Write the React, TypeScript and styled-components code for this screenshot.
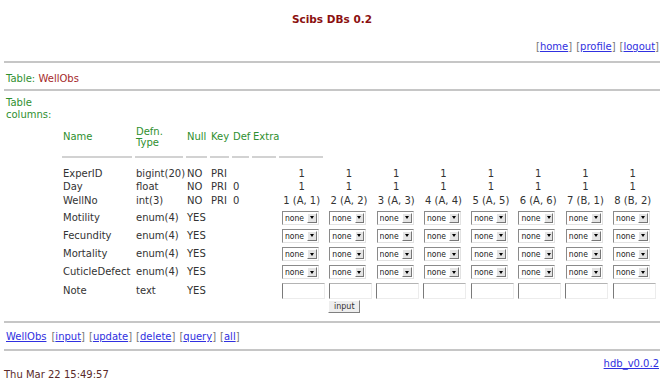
import styled, { createGlobalStyle } from 'styled-components';

const GlobalStyle = createGlobalStyle`
  html, body {
    margin: 0;
    padding: 0;
    background: #fff;
  }

  body {
    font-family: "DejaVu Sans", "Liberation Sans", sans-serif;
    font-size: 10px;
    color: #333;
  }
`;

const COLUMNS = '70px 48px 21px 19px 17px 24px repeat(8, 44.3px)';

const wells = [
  { no: 1, row: 'A', col: 1 },
  { no: 2, row: 'A', col: 2 },
  { no: 3, row: 'A', col: 3 },
  { no: 4, row: 'A', col: 4 },
  { no: 5, row: 'A', col: 5 },
  { no: 6, row: 'A', col: 6 },
  { no: 7, row: 'B', col: 1 },
  { no: 8, row: 'B', col: 2 },
];

const keyFields = [
  { name: 'ExperID', type: 'bigint(20)', key: 'PRI', def: '', value: () => '1' },
  { name: 'Day', type: 'float', key: 'PRI', def: '0', value: () => '1' },
  {
    name: 'WellNo',
    type: 'int(3)',
    key: 'PRI',
    def: '0',
    value: (w: (typeof wells)[number]) => `${w.no} (${w.row}, ${w.col})`,
  },
];

const enumFields = ['Motility', 'Fecundity', 'Mortality', 'CuticleDefect'];

const NavLinks = ({ items }: { items: string[] }) => (
  <>
    {items.map((item, i) => (
      <Bracket key={item} $first={i === 0}>
        [<Link href="#">{item}</Link>]
      </Bracket>
    ))}
  </>
);

const App = () => {
  return (
    <Page>
      <GlobalStyle />
      <Title>Scibs DBs 0.2</Title>
      <Nav>
        <NavLinks items={['home', 'profile', 'logout']} />
      </Nav>
      <Divider />
      <TableName>
        <Label>Table: </Label>
        <Accent>WellObs</Accent>
      </TableName>
      <Divider />
      <Columns>
        <ColumnsLabel>Table columns:</ColumnsLabel>
        <Grid>
          <Row $h={24}>
            <HeadCell>Name</HeadCell>
            <HeadCell>
              Defn.
              <br />
              Type
            </HeadCell>
            <HeadCell>Null</HeadCell>
            <HeadCell>Key</HeadCell>
            <HeadCell>Def</HeadCell>
            <HeadCell>Extra</HeadCell>
          </Row>
          <Row $h={18}>
            {Array.from({ length: 7 }).map((_, i) => (
              <Underline key={i} />
            ))}
          </Row>
          {keyFields.map((f) => (
            <Row key={f.name} $h={13.5}>
              <Cell>{f.name}</Cell>
              <Cell>{f.type}</Cell>
              <Cell>NO</Cell>
              <Cell>{f.key}</Cell>
              <Cell>{f.def}</Cell>
              <Cell />
              {wells.map((w) => (
                <Cell key={w.no} $center>
                  {f.value(w)}
                </Cell>
              ))}
            </Row>
          ))}
          {enumFields.map((name, i) => (
            <Row key={name} $h={18.25} $top={i === 0 ? 1 : 0}>
              <Cell>{name}</Cell>
              <Cell>enum(4)</Cell>
              <Cell>YES</Cell>
              <Cell />
              <Cell />
              <Cell />
              {wells.map((w) => (
                <Cell key={w.no}>
                  <SelectBox>
                    <NativeSelect defaultValue="none">
                      <option>none</option>
                    </NativeSelect>
                    <ArrowButton />
                  </SelectBox>
                </Cell>
              ))}
            </Row>
          ))}
          <Row $h={18}>
            <Cell>Note</Cell>
            <Cell>text</Cell>
            <Cell>YES</Cell>
            <Cell />
            <Cell />
            <Cell />
            {wells.map((w) => (
              <Cell key={w.no}>
                <TextInput type="text" />
              </Cell>
            ))}
          </Row>
          <Row $h={14.5}>
            <ButtonCell>
              <InputButton type="button">input</InputButton>
            </ButtonCell>
          </Row>
        </Grid>
      </Columns>
      <Divider $top={7} />
      <Actions>
        <Link href="#">WellObs</Link>
        <NavLinks items={['input', 'update', 'delete', 'query', 'all']} />
      </Actions>
      <Divider />
      <Footer>
        <DateText>Thu Mar 22 15:49:57</DateText>
        <Link href="#">hdb_v0.0.2</Link>
      </Footer>
    </Page>
  );
};

const Page = styled.div`
  padding: 0 4px;
  width: 656px;
`;

const Title = styled.h1`
  height: 38px;
  margin: 0;
  font-size: 10.5px;
  font-weight: bold;
  line-height: 38px;
  text-align: center;
  color: #8b1010;
`;

const Nav = styled.div`
  height: 18px;
  padding-right: 1px;
  line-height: 18px;
  text-align: right;
  margin-bottom: 5px;
`;

const Bracket = styled.span<{ $first?: boolean }>`
  margin-left: ${(p) => (p.$first ? 0 : 4)}px;
  color: #777;
`;

const Link = styled.a`
  color: #3030e0;
  text-decoration: underline;
`;

const Divider = styled.div<{ $top?: number }>`
  height: 2px;
  margin-top: ${(p) => p.$top ?? 0}px;
  background: #c6c6c6;
`;

const TableName = styled.div`
  padding: 10px 2px 4px;
  line-height: 12px;
`;

const Label = styled.span`
  color: #2f8f2f;
`;

const Accent = styled.span`
  color: #a52a2a;
`;

const Columns = styled.div`
  padding: 6px 0 0 2px;
`;

const ColumnsLabel = styled.div`
  width: 50px;
  line-height: 11.5px;
  color: #2f8f2f;
`;

const Grid = styled.div`
  margin: 5px 0 0 56px;
`;

const Row = styled.div<{ $h: number; $top?: number }>`
  display: grid;
  grid-template-columns: ${COLUMNS};
  column-gap: 3px;
  align-items: center;
  height: ${(p) => p.$h}px;
  margin-top: ${(p) => p.$top ?? 0}px;
`;

const Cell = styled.div<{ $center?: boolean }>`
  padding-left: 1px;
  white-space: nowrap;
  line-height: 12px;
  text-align: ${(p) => (p.$center ? 'center' : 'left')};
`;

const HeadCell = styled(Cell)`
  line-height: 11.5px;
  color: #2f8f2f;
`;

const Underline = styled.div`
  align-self: start;
  height: 2px;
  margin-top: 7px;
  background: #d2d2d2;
`;

const SelectBox = styled.span`
  display: inline-flex;
  align-items: center;
  box-sizing: border-box;
  width: 37px;
  height: 14px;
  margin-left: 2px;
  border: 1px solid;
  border-color: #8a8a8a #e2e2e2 #e2e2e2 #8a8a8a;
  background: #fff;
`;

const NativeSelect = styled.select`
  appearance: none;
  -webkit-appearance: none;
  width: 25px;
  height: 12px;
  padding: 0 0 0 2px;
  margin: 0;
  border: 0;
  outline: 0;
  background: transparent;
  font: 8.5px "DejaVu Sans Condensed", "DejaVu Sans", sans-serif;
  line-height: 12px;
  color: #222;
`;

const ArrowButton = styled.span`
  display: flex;
  align-items: center;
  justify-content: center;
  box-sizing: border-box;
  width: 10px;
  height: 10px;
  margin: 0 1px 0 auto;
  border: 1px solid;
  border-color: #fff #777 #777 #fff;
  background: #e4e4e4;

  &::after {
    content: '';
    border-left: 2.5px solid transparent;
    border-right: 2.5px solid transparent;
    border-top: 3px solid #000;
  }
`;

const TextInput = styled.input`
  box-sizing: border-box;
  width: 43px;
  height: 16px;
  margin: 0 0 0 1.5px;
  padding: 0;
  border: 1px solid;
  border-color: #b4b4b4 #ececec #ececec #7a7a7a;
  background: #fff;
`;

const ButtonCell = styled.div`
  grid-column: 8;
`;

const InputButton = styled.button`
  box-sizing: border-box;
  width: 32px;
  height: 13px;
  margin-left: 2px;
  padding: 0;
  border: 1px solid;
  border-color: #fff #808080 #808080 #fff;
  background: #eee;
  font: 8px "DejaVu Sans", sans-serif;
  line-height: 11px;
  color: #333;
`;

const Actions = styled.div`
  padding: 8px 2px 0;
  height: 18px;
  line-height: 12px;

  & > span:first-of-type {
    margin-left: 5px;
  }
`;

const Footer = styled.div`
  display: flex;
  justify-content: space-between;
  height: 29px;
  padding: 7px 1px 0 0;
  box-sizing: border-box;
  line-height: 12px;
`;

const DateText = styled.span`
  align-self: flex-end;
  margin-bottom: -1px;
  color: #5a2a2a;
`;

export default App;
